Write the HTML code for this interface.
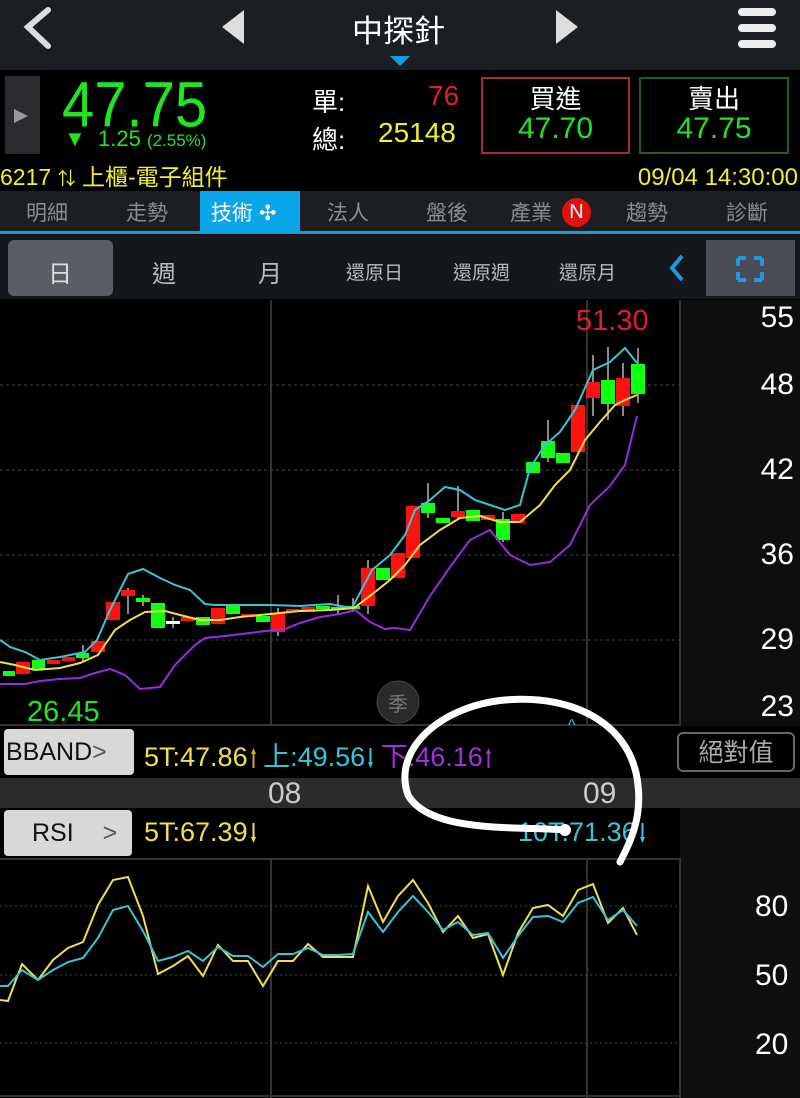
<!DOCTYPE html>
<html><head><meta charset="utf-8"><style>
*{margin:0;padding:0;box-sizing:border-box}
body{width:800px;height:1098px;background:#000;font-family:"Liberation Sans","Noto Sans CJK TC",sans-serif;position:relative;overflow:hidden;color:#fff}
.a{position:absolute;white-space:nowrap}
.ar{display:inline-block;width:5px;height:20px;margin-left:3px;vertical-align:-2px}
</style></head><body>
<!-- header -->
<div class="a" style="left:0;top:0;width:800px;height:70px;background:#1b1e23"></div>
<svg class="a" style="left:0;top:0" width="800" height="72">
<polyline points="48,10 28,27 48,46" fill="none" stroke="#ddd" stroke-width="6" stroke-linecap="round"/>
<polygon points="244,10 244,44 222,27" fill="#ddd"/>
<polygon points="556,10 556,44 578,27" fill="#ddd"/>
<rect x="738" y="8" width="38" height="8" rx="4" fill="#eee"/>
<rect x="738" y="24" width="38" height="8" rx="4" fill="#eee"/>
<rect x="738" y="40" width="38" height="8" rx="4" fill="#eee"/>
<polygon points="390,56 410,56 400,66" fill="#1a9be0"/>
</svg>
<div class="a" style="top:6px;left:352px;font-size:31px;color:#fff">中探針</div>
<!-- quote -->
<div class="a" style="left:5px;top:76px;width:35px;height:78px;background:#2a2c30"></div>
<svg class="a" style="left:12px;top:106px" width="20" height="20"><polygon points="2,3 2,17 16,10" fill="#999"/></svg>
<div class="a" style="left:62px;top:68px;font-size:58px;color:#22e522;transform:scaleY(1.1);transform-origin:top left">47.75</div>
<div class="a" style="left:64px;top:126px;font-size:22px;color:#22e522">▼ &nbsp;1.25 <span style="font-size:17px">(2.55%)</span></div>
<div class="a" style="left:312px;top:82px;font-size:26px;color:#fff">單:</div>
<div class="a" style="left:312px;top:120px;font-size:26px;color:#fff">總:</div>
<div class="a" style="left:428px;top:80px;font-size:28px;color:#e02020">76</div>
<div class="a" style="left:378px;top:117px;font-size:28px;color:#f0f030">25148</div>
<div class="a" style="left:481px;top:77px;width:149px;height:77px;border:2px solid #a03030"></div>
<div class="a" style="left:481px;top:84px;width:149px;text-align:center;font-size:26px;line-height:30px">買進<br><span style="color:#22e522;font-size:30px">47.70</span></div>
<div class="a" style="left:639px;top:77px;width:150px;height:77px;border:2px solid #206020"></div>
<div class="a" style="left:639px;top:84px;width:150px;text-align:center;font-size:26px;line-height:30px">賣出<br><span style="color:#22e522;font-size:30px">47.75</span></div>
<div class="a" style="left:0;top:164px;font-size:23px;line-height:27px;color:#f0f030">6217 <span style="font-size:18px">⇅</span> 上櫃-電子組件</div>
<div class="a" style="right:2px;top:164px;font-size:24px;line-height:27px;color:#f0f030">09/04 14:30:00</div>
<!-- tabs -->
<div class="a" style="left:0;top:191px;width:800px;height:41px;background:#1b1e23"></div>
<div class="a" style="left:200px;top:191px;width:100px;height:41px;background:#0aa6ea"></div>
<div class="a" style="left:0;top:231px;width:800px;height:3px;background:#1a9be0"></div>
<div class="a" style="left:0;top:197px;width:800px;font-size:21px;color:#8a8d92">
<span class="a" style="left:26px">明細</span><span class="a" style="left:126px">走勢</span><span class="a" style="left:211px;color:#fff">技術 ✣</span><span class="a" style="left:327px">法人</span><span class="a" style="left:426px">盤後</span><span class="a" style="left:510px">產業</span><span class="a" style="left:626px">趨勢</span><span class="a" style="left:726px">診斷</span></div>
<div class="a" style="left:562px;top:198px;width:29px;height:29px;border-radius:50%;background:#e01010;color:#fff;font-size:20px;text-align:center;line-height:29px">N</div>
<!-- period row -->
<div class="a" style="left:0;top:235px;width:800px;height:64px;background:#14171b"></div>
<div class="a" style="left:8px;top:240px;width:105px;height:56px;border-radius:6px;background:#5a5e64"></div>
<div class="a" style="left:706px;top:240px;width:89px;height:56px;background:#4a4e54"></div>
<div class="a" style="left:0;top:254px;width:700px;font-size:24px;color:#bbb">
<span class="a" style="left:48px;color:#ddd">日</span><span class="a" style="left:152px">週</span><span class="a" style="left:258px">月</span><span class="a" style="left:346px;font-size:19px;top:4px">還原日</span><span class="a" style="left:453px;font-size:19px;top:4px">還原週</span><span class="a" style="left:559px;font-size:19px;top:4px">還原月</span></div>
<svg class="a" style="left:660px;top:250px" width="140" height="40">
<polyline points="22,6 12,18 22,30" fill="none" stroke="#1a9be0" stroke-width="4"/>
<path d="M78,8h8M78,8v8M102,8h-8M102,8v8M78,30h8M78,30v-8M102,30h-8M102,30v-8" stroke="#1a9be0" stroke-width="4" fill="none"/>
</svg>
<!-- main chart -->
<div class="a" style="left:680px;top:300px;width:120px;height:426px;background:#0e0e0e"></div>
<svg class="a" style="left:0;top:300px" width="800" height="426">
<line x1="271" y1="0" x2="271" y2="426" stroke="#333" stroke-width="2"/>
<line x1="587" y1="0" x2="587" y2="426" stroke="#333" stroke-width="2"/>
<line x1="680" y1="0" x2="680" y2="426" stroke="#333" stroke-width="2"/>
<g stroke="#444" stroke-dasharray="3,3"><line x1="0" y1="85" x2="680" y2="85"/><line x1="0" y1="170" x2="680" y2="170"/><line x1="0" y1="255" x2="680" y2="255"/><line x1="0" y1="340" x2="680" y2="340"/></g>
<line x1="0" y1="425" x2="680" y2="425" stroke="#333" stroke-width="2"/>
</svg>
<svg class="a" style="left:0;top:0" width="680" height="726">
<g stroke="#888" stroke-width="2">
<line x1="83" y1="645" x2="83" y2="662"/><line x1="128" y1="588" x2="128" y2="614"/><line x1="143" y1="595" x2="143" y2="606"/><line x1="173" y1="617" x2="173" y2="628"/><line x1="278" y1="608" x2="278" y2="636"/><line x1="338" y1="595" x2="338" y2="615"/><line x1="353" y1="598" x2="353" y2="612"/><line x1="368" y1="560" x2="368" y2="614"/><line x1="428" y1="483" x2="428" y2="518"/><line x1="458" y1="486" x2="458" y2="520"/><line x1="503" y1="512" x2="503" y2="542"/><line x1="548" y1="420" x2="548" y2="462"/><line x1="593" y1="355" x2="593" y2="416"/><line x1="608" y1="347" x2="608" y2="420"/><line x1="623" y1="363" x2="623" y2="416"/><line x1="638" y1="348" x2="638" y2="403"/>
</g>
<g>
<rect x="3" y="671" width="12" height="5" fill="#1f1"/><rect x="16" y="662" width="14" height="12" fill="#f11"/><rect x="32" y="660" width="13" height="9" fill="#1f1"/><rect x="47" y="660" width="13" height="4" fill="#f11"/><rect x="62" y="657" width="13" height="4" fill="#f11"/><rect x="76" y="653" width="13" height="5" fill="#1f1"/><rect x="91" y="641" width="14" height="11" fill="#f11"/><rect x="106" y="602" width="14" height="18" fill="#f11"/><rect x="121" y="590" width="14" height="6" fill="#f11"/><rect x="136" y="598" width="14" height="4" fill="#1f1"/><rect x="151" y="603" width="14" height="25" fill="#1f1"/><rect x="166" y="621" width="14" height="3" fill="#fff"/><rect x="181" y="617" width="14" height="4" fill="#f11"/><rect x="196" y="617" width="14" height="8" fill="#1f1"/><rect x="211" y="608" width="14" height="16" fill="#f11"/><rect x="226" y="606" width="14" height="8" fill="#1f1"/><rect x="241" y="614" width="14" height="3" fill="#f11"/><rect x="256" y="616" width="14" height="6" fill="#1f1"/><rect x="271" y="613" width="14" height="19" fill="#f11"/><rect x="286" y="609" width="14" height="3" fill="#f11"/><rect x="301" y="607" width="14" height="5" fill="#f11"/><rect x="316" y="606" width="14" height="3" fill="#1f1"/><rect x="331" y="607" width="14" height="3" fill="#1f1"/><rect x="346" y="606" width="14" height="3" fill="#1f1"/><rect x="361" y="568" width="14" height="38" fill="#f11"/><rect x="376" y="568" width="14" height="12" fill="#1f1"/><rect x="391" y="553" width="14" height="25" fill="#f11"/><rect x="406" y="506" width="14" height="52" fill="#f11"/><rect x="421" y="503" width="14" height="10" fill="#1f1"/><rect x="436" y="518" width="14" height="5" fill="#1f1"/><rect x="451" y="511" width="14" height="6" fill="#f11"/><rect x="466" y="510" width="14" height="11" fill="#1f1"/><rect x="481" y="515" width="14" height="5" fill="#f11"/><rect x="496" y="519" width="14" height="21" fill="#1f1"/><rect x="511" y="514" width="14" height="9" fill="#f11"/><rect x="526" y="462" width="14" height="11" fill="#1f1"/><rect x="541" y="441" width="14" height="17" fill="#1f1"/><rect x="556" y="453" width="14" height="10" fill="#1f1"/><rect x="571" y="405" width="14" height="47" fill="#f11"/><rect x="586" y="382" width="14" height="16" fill="#f11"/><rect x="601" y="380" width="14" height="24" fill="#1f1"/><rect x="616" y="378" width="14" height="28" fill="#f11"/><rect x="631" y="364" width="14" height="30" fill="#1f1"/>
</g>
<polyline fill="none" stroke="#3ac4d8" stroke-width="2" points="0,640 10,647 25,652 40,660 60,657 85,652 97,640 110,610 128,574 143,569 160,578 175,585 190,590 205,604 215,605 240,605 270,605 300,606 330,604 352,608 372,570 390,555 405,535 415,510 430,500 445,487 460,490 475,500 490,505 505,510 520,505 530,468 545,445 560,432 575,410 593,370 610,362 625,348 637,363"/>
<polyline fill="none" stroke="#f0e050" stroke-width="2" points="0,662 15,665 35,670 60,668 80,663 98,655 115,630 130,620 145,612 165,611 180,615 200,620 220,620 240,617 270,614 300,611 330,610 354,608 375,592 390,580 405,565 420,545 440,530 460,518 480,516 500,522 520,522 540,505 555,485 570,470 585,440 600,422 615,405 625,400 637,395"/>
<polyline fill="none" stroke="#9a2ae0" stroke-width="2" points="0,684 25,684 40,681 60,679 80,678 95,673 110,669 125,675 140,689 160,687 175,665 195,645 205,638 225,636 250,633 265,631 285,629 300,623 320,617 340,614 355,610 370,622 385,629 395,628 410,630 430,596 450,567 470,540 490,530 510,555 530,565 550,562 570,545 590,505 610,486 625,465 637,416"/>
<text x="576" y="330" font-size="29" fill="#e02020" font-family="Liberation Sans">51.30</text>
<text x="27" y="721" font-size="29" fill="#22e522" font-family="Liberation Sans">26.45</text>
<circle cx="398" cy="702" r="21" fill="#2a2a2a" stroke="#444"/>
<text x="388" y="711" font-size="20" fill="#777" font-family="Noto Sans CJK TC">季</text>
<text x="568" y="730" font-size="16" fill="#3ac4d8">^</text>
</svg>
<div class="a" style="right:6px;top:300px;font-size:30px;line-height:36px;color:#fff;text-align:right">55</div>
<div class="a" style="right:6px;top:368px;font-size:30px;color:#fff">48</div>
<div class="a" style="right:6px;top:453px;font-size:30px;color:#fff">42</div>
<div class="a" style="right:6px;top:538px;font-size:30px;color:#fff">36</div>
<div class="a" style="right:6px;top:623px;font-size:30px;color:#fff">29</div>
<div class="a" style="right:6px;top:690px;font-size:30px;color:#fff">23</div>
<!-- bband row -->
<div class="a" style="left:4px;top:729px;width:130px;height:46px;border-radius:4px;background:#d8d8d8;color:#111;font-size:25px;line-height:46px;padding-left:2px">BBAND<span style="color:#555">&gt;</span></div>
<div class="a" style="left:144px;top:735px;font-size:27px"><span style="color:#f0e050">5T:47.86<svg class="ar" viewBox="0 0 5 20"><path d="M0,6 L2.5,0 L5,6 L3.5,6 L3.5,20 L1.5,20 L1.5,6Z" fill="#c8b020"/></svg></span> <span style="color:#3ac4d8">上:49.56<svg class="ar" viewBox="0 0 5 20"><path d="M0,14 L2.5,20 L5,14 L3.5,14 L3.5,0 L1.5,0 L1.5,14Z" fill="#3ac4d8"/></svg></span> <span style="color:#a030e0">下:46.16<svg class="ar" viewBox="0 0 5 20"><path d="M0,6 L2.5,0 L5,6 L3.5,6 L3.5,20 L1.5,20 L1.5,6Z" fill="#a030e0"/></svg></span></div>
<div class="a" style="left:677px;top:732px;width:118px;height:40px;border:2px solid #666;border-radius:6px;color:#aaa;font-size:25px;text-align:center;line-height:38px">絕對值</div>
<!-- date band -->
<div class="a" style="left:0;top:778px;width:800px;height:30px;background:#2b2b2b"></div>
<div class="a" style="left:268px;top:777px;font-size:30px;color:#ccc">08</div>
<div class="a" style="left:583px;top:777px;font-size:30px;color:#ccc">09</div>
<!-- rsi row -->
<div class="a" style="left:680px;top:808px;width:120px;height:290px;background:#0e0e0e"></div>
<div class="a" style="left:4px;top:810px;width:128px;height:46px;border-radius:4px;background:#d8d8d8;color:#111;font-size:25px;line-height:46px;padding-left:28px">RSI <span style="color:#555;margin-left:22px">&gt;</span></div>
<div class="a" style="left:144px;top:817px;font-size:27px;color:#f0e050">5T:67.39<svg class="ar" viewBox="0 0 5 20"><path d="M0,14 L2.5,20 L5,14 L3.5,14 L3.5,0 L1.5,0 L1.5,14Z" fill="#f0e050"/></svg></div>
<div class="a" style="left:518px;top:817px;font-size:27px;color:#3ac4d8">10T:71.36<svg class="ar" viewBox="0 0 5 20"><path d="M0,14 L2.5,20 L5,14 L3.5,14 L3.5,0 L1.5,0 L1.5,14Z" fill="#3ac4d8"/></svg></div>
<svg class="a" style="left:0;top:858px" width="800" height="240">
<line x1="0" y1="1" x2="680" y2="1" stroke="#333" stroke-width="2"/>
<line x1="271" y1="0" x2="271" y2="240" stroke="#333" stroke-width="2"/>
<line x1="587" y1="0" x2="587" y2="240" stroke="#333" stroke-width="2"/>
<line x1="680" y1="0" x2="680" y2="240" stroke="#333" stroke-width="2"/>
<g stroke="#444" stroke-dasharray="2,3"><line x1="0" y1="48" x2="680" y2="48"/><line x1="0" y1="117" x2="680" y2="117"/><line x1="0" y1="185" x2="680" y2="185"/></g>
<line x1="0" y1="238" x2="680" y2="238" stroke="#333" stroke-width="2"/>
<polyline fill="none" stroke="#f0e050" stroke-width="2" points="0,142 8,143 22,106 38,122 53,102 68,90 83,84 98,47 113,22 128,19 143,58 158,116 173,108 188,98 203,118 218,87 233,103 248,103 263,128 278,103 293,103 308,86 323,99 338,99 353,99 368,28 383,64 398,38 413,22 428,45 443,74 458,58 473,80 488,76 503,117 518,75 533,50 548,47 563,58 578,32 593,26 608,65 623,50 637,77"/>
<polyline fill="none" stroke="#3ac4d8" stroke-width="2" points="0,128 8,128 22,112 38,122 53,112 68,104 83,100 98,80 113,52 128,48 143,73 158,103 173,99 188,93 203,103 218,89 233,98 248,98 263,109 278,96 293,96 308,90 323,97 338,97 353,96 368,54 383,74 398,54 413,38 428,54 443,72 458,64 473,77 488,75 503,100 518,78 533,59 548,58 563,64 578,45 593,39 608,62 623,52 637,68"/>
<text x="755" y="58" font-size="30" fill="#fff" font-family="Liberation Sans">80</text>
<text x="755" y="127" font-size="30" fill="#fff" font-family="Liberation Sans">50</text>
<text x="755" y="196" font-size="30" fill="#fff" font-family="Liberation Sans">20</text>
</svg>
<!-- hand drawn loop -->
<svg class="a" style="left:0;top:0" width="800" height="1098">
<path d="M566,830 C520,826 430,834 408,795 C392,750 440,706 505,700 C575,694 632,725 638,785 C642,818 630,843 620,862" fill="none" stroke="#fff" stroke-width="7" stroke-linecap="round"/>
<circle cx="565" cy="830" r="6" fill="#fff"/>
</svg>
</body></html>
